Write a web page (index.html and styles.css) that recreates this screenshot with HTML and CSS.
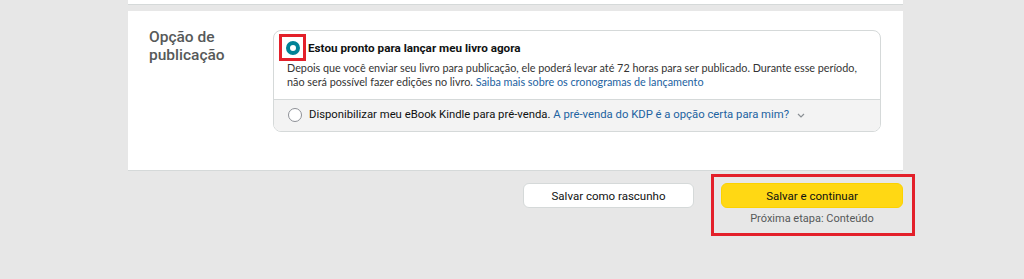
FILE: index.html
```html
<!DOCTYPE html>
<html lang="pt-BR">
<head>
<meta charset="utf-8">
<link rel="stylesheet" href="styles.css">
</head>
<body>
<div class="page">
  <div class="top-card"></div>
  <section class="card">
    <h2 class="label">Opção de publicação</h2>
    <div class="options">
      <div class="opt opt-main">
        <div class="opt-head">
          <span class="hl"><span class="radio checked"></span></span>
          <span class="opt-title">Estou pronto para lançar meu livro agora</span>
        </div>
        <p class="opt-desc">Depois que você enviar seu livro para publicação, ele poderá levar até 72 horas para ser publicado. Durante esse período, não será possível fazer edições no livro. <a href="#">Saiba mais sobre os cronogramas de lançamento</a></p>
      </div>
      <div class="opt opt-alt">
        <span class="radio"></span>
        <span class="opt-text">Disponibilizar meu eBook Kindle para pré-venda. <a href="#">A pré-venda do KDP é a opção certa para mim?</a></span>
        <svg class="chev" width="8" height="5" viewBox="0 0 8 5"><path d="M1 1l3 3 3-3" fill="none" stroke="#8a8f94" stroke-width="1.2"/></svg>
      </div>
    </div>
  </section>
  <div class="actions">
    <button class="btn btn-draft">Salvar como rascunho</button>
    <div class="next-box">
      <button class="btn btn-primary">Salvar e continuar</button>
      <div class="next-step">Próxima etapa: Conteúdo</div>
    </div>
  </div>
</div>
</body>
</html>
```
FILE: styles.css
```css
* { box-sizing: border-box; }
html, body { margin: 0; padding: 0; }
body {
  background: #e7e7e7;
  font-family: Roboto, "Noto Sans", sans-serif;
  color: #0f1111;
  height: 279px;
  overflow: hidden;
}
.page {
  width: 775px;
  margin-left: 128px;
}
.top-card {
  height: 5px;
  background: #fff;
  border-bottom: 1px solid #d5d9d9;
}
.card {
  margin-top: 6px;
  background: #fff;
  border-bottom: 1px solid #d5d9d9;
  height: 160px;
  padding: 19px 21px 0 21px;
  display: flex;
}
.label {
  margin: 0;
  width: 124px;
  margin-top: -2px;
  font-size: 15.5px;
  line-height: 18px;
  font-weight: 500;
  color: #565959;
}
.options {
  width: 608px;
  height: 102px;
  border: 1px solid #d5d9d9;
  border-radius: 8px;
  overflow: hidden;
  display: flex;
  flex-direction: column;
}
.opt-main {
  height: 69px;
  padding: 3px 12px 0 13px;
  border-bottom: 1px solid #d5d9d9;
}
.opt-head {
  display: flex;
  align-items: center;
  gap: 2px;
}
.hl {
  width: 27px;
  height: 27px;
  border: 3px solid #e3202a;
  display: flex;
  align-items: center;
  justify-content: center;
  margin-left: -8px;
}
.radio {
  width: 14px;
  height: 14px;
  border-radius: 50%;
  border: 1px solid #8d9096;
  background: #fff;
  flex: none;
}
.radio.checked {
  border: 4px solid #008296;
  background: #fff;
}
.opt-title {
  font-size: 11.7px;
  font-weight: 700;
  color: #0f1111;
}
.opt-desc {
  margin: 0;
  font-family: Lato, Roboto, sans-serif;
  font-size: 10.8px;
  line-height: 14px;
  color: #333;
}
a { color: #2162a1; text-decoration: none; }
.opt-alt {
  flex: 1;
  background: #f3f3f3;
  display: flex;
  align-items: center;
  padding: 0 0 2px 14px;
  font-size: 11.3px;
  color: #0f1111;
}
.opt-alt .radio { margin-right: 7px; }
.chev { margin-left: 8px; margin-top: 1px; }
.actions {
  display: flex;
  justify-content: flex-end;
  margin-top: 12px;
}
.btn {
  font-family: inherit;
  font-size: 11.5px;
  height: 25px;
  border-radius: 6px;
  cursor: pointer;
  color: #0f1111;
}
.btn-draft {
  width: 171px;
  background: #fff;
  border: 1px solid #d5d9d9;
  margin-right: 17px;
}
.next-box {
  width: 204px;
  height: 62px;
  border: 3px solid #e3202a;
  margin-top: -9px;
  margin-right: -12px;
  padding: 6px 9px 0 7px;
  display: flex;
  flex-direction: column;
  align-items: stretch;
}
.btn-primary {
  background: #ffd814;
  border: 1px solid #fcd200;
  width: 100%;
}
.next-step {
  text-align: center;
  font-size: 11px;
  color: #565959;
  margin-top: 4px;
}
```
